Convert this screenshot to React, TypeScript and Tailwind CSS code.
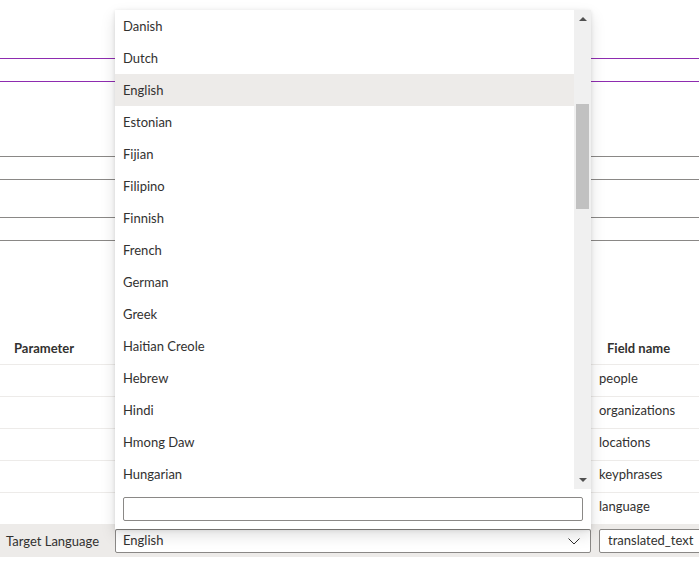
import React from "react";

const languages = [
  "Danish",
  "Dutch",
  "English",
  "Estonian",
  "Fijian",
  "Filipino",
  "Finnish",
  "French",
  "German",
  "Greek",
  "Haitian Creole",
  "Hebrew",
  "Hindi",
  "Hmong Daw",
  "Hungarian",
];

const fields = ["people", "organizations", "locations", "keyphrases", "language"];

export default function App() {
  return (
    <div
      className="relative w-[699px] h-[562px] overflow-hidden bg-white text-[13px] text-[#323130]"
      style={{ fontFamily: 'Lato, "Open Sans", sans-serif' }}
    >
      {/* background diagram lines */}
      <div className="flex flex-col">
        <div className="mt-[58px] h-px bg-[#8e2cb0]" />
        <div className="mt-[22px] h-px bg-[#8e2cb0]" />
        <div className="mt-[74px] h-px bg-[#8a8886]" />
        <div className="mt-[22px] h-px bg-[#8a8886]" />
        <div className="mt-[37px] h-px bg-[#8a8886]" />
        <div className="mt-[22px] h-px bg-[#8a8886]" />
      </div>

      {/* table */}
      <div className="mt-[92px] flex flex-col">
        <div className="flex h-[32px] items-center border-b border-[#edebe9] font-bold">
          <div className="w-[115px] shrink-0 pl-[14px] pt-[1px]">Parameter</div>
          <div className="w-[476px] shrink-0" />
          <div className="shrink-0 pl-[16px] pt-[1px]">Field name</div>
        </div>
        {fields.map((f) => (
          <div key={f} className="flex h-[32px] border-b border-[#edebe9]">
            <div className="w-[115px] shrink-0" />
            <div className="w-[476px] shrink-0" />
            <div className="shrink-0 pl-[8px] pt-[3px] leading-[20px]">{f}</div>
          </div>
        ))}
        <div className="flex h-[32px] items-center bg-[#edebe9]">
          <div className="w-[115px] shrink-0 whitespace-nowrap pl-[6px] pt-[1px]">Target Language</div>
          <div className="flex h-[24px] w-[476px] shrink-0 items-center justify-between rounded-[2px] border border-[#8a8886] bg-white pl-[7px] pr-[10px]">
            <span>English</span>
            <svg width="12" height="7" viewBox="0 0 12 7" fill="none">
              <path d="M0.5 0.5 L6 6 L11.5 0.5" stroke="#323130" strokeWidth="1" />
            </svg>
          </div>
          <div className="ml-[8px] flex h-[24px] w-[120px] shrink-0 items-center rounded-[2px] border border-[#8a8886] bg-white pl-[8px]">
            translated_text
          </div>
        </div>
      </div>

      {/* dropdown panel */}
      <div className="absolute left-[115px] top-[10px] flex h-[519px] w-[476px] flex-col bg-white shadow-[0_6px_14px_rgba(0,0,0,0.13),0_1px_4px_rgba(0,0,0,0.11)]">
        <div className="flex h-[480px]">
          <div className="flex flex-1 flex-col">
            {languages.map((l) => (
              <div
                key={l}
                className={
                  "flex h-[32px] items-center pl-[8px] pt-[1px] " +
                  (l === "English" ? "bg-[#edebe9]" : "")
                }
              >
                {l}
              </div>
            ))}
          </div>
          <div className="flex h-[479px] w-[17px] flex-col items-center bg-[#f0f0f0]">
            <div className="flex h-[17px] w-full items-center justify-center">
              <svg width="8" height="5" viewBox="0 0 8 5">
                <path d="M0 5 L4 1 L8 5 Z" fill="#505050" />
              </svg>
            </div>
            <div className="mt-[77px] h-[105px] w-[13px] bg-[#c1c1c1]" />
            <div className="flex-1" />
            <div className="flex h-[17px] w-full items-center justify-center">
              <svg width="8" height="5" viewBox="0 0 8 5">
                <path d="M0 0 L8 0 L4 4 Z" fill="#505050" />
              </svg>
            </div>
          </div>
        </div>
        <div className="px-[8px] pt-[7px]">
          <div className="h-[24px] w-full rounded-[2px] border border-[#8a8886] bg-white" />
        </div>
      </div>
    </div>
  );
}
